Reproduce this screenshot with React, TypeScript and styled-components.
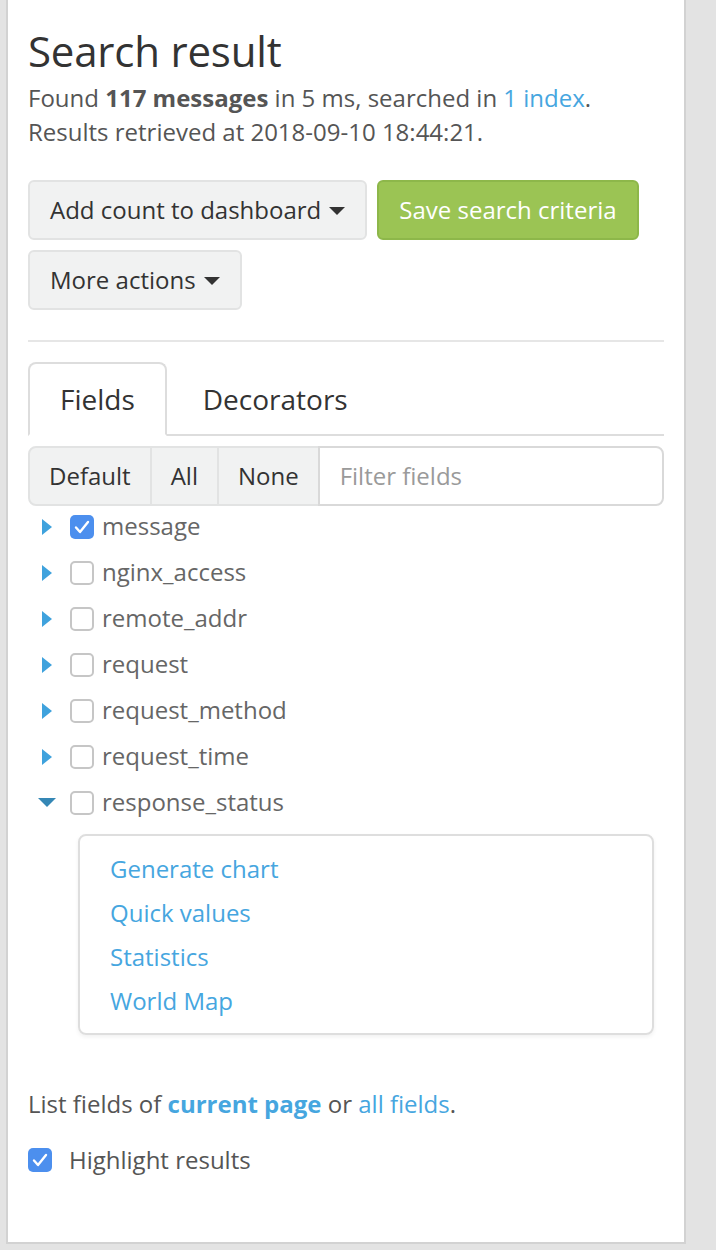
import React from "react";
import styled, { createGlobalStyle } from "styled-components";

const Global = createGlobalStyle`
  html, body { margin: 0; padding: 0; background: #e3e3e3; }
  body { font-family: "Open Sans", "Noto Sans", sans-serif; font-size: 24px; line-height: 34.29px; color: #555; }
  * { box-sizing: border-box; }
`;

const Page = styled.div`
  width: 716px;
  height: 1250px;
  background: #e3e3e3;
  overflow: hidden;
`;

const Panel = styled.div`
  margin-left: 6px;
  width: 680px;
  height: 1244px;
  background: #fff;
  border: 2px solid #d2d2d2;
  border-top: none;
  padding: 28px 20px 0 20px;
`;

const Title = styled.h1`
  margin: 0;
  font-size: 42px;
  line-height: 46px;
  font-weight: 400;
  color: #333;
  letter-spacing: -0.2px;
`;

const Info = styled.p`
  margin: 7px 0 0;
  color: #555;
`;

const Link = styled.a<{ $bold?: boolean }>`
  color: #46a6df;
  text-decoration: none;
  font-weight: ${(p) => (p.$bold ? 700 : 400)};
  cursor: pointer;
`;

const Actions = styled.div`
  margin-top: 30px;
  display: flex;
  flex-wrap: wrap;
  gap: 10px;
  width: 620px;
`;

const Button = styled.button<{ $variant?: "default" | "success" }>`
  font-family: inherit;
  font-size: 24px;
  line-height: 34px;
  padding: 11px 20px;
  border-radius: 6px;
  border: 2px solid ${(p) => (p.$variant === "success" ? "#8db74a" : "#e2e3e3")};
  background: ${(p) => (p.$variant === "success" ? "#9bc454" : "#f1f2f2")};
  color: ${(p) => (p.$variant === "success" ? "#fff" : "#333")};
  display: inline-flex;
  align-items: center;
  cursor: pointer;
`;

const Caret = styled.span`
  display: inline-block;
  margin-left: 8px;
  margin-top: 2px;
  width: 0;
  height: 0;
  border-top: 8px solid #333;
  border-left: 8px solid transparent;
  border-right: 8px solid transparent;
`;

const Divider = styled.hr`
  margin: 30px 0 20px;
  border: none;
  border-top: 2px solid #e6e6e6;
  height: 0;
`;

const Tabs = styled.ul`
  list-style: none;
  margin: 0;
  padding: 0;
  display: flex;
  border-bottom: 2px solid #dddddd;
`;

const Tab = styled.li<{ $active?: boolean }>`
  margin-bottom: -2px;
  margin-right: 4px;
  padding: 15px 30px;
  font-size: 28px;
  line-height: 40px;
  color: #333;
  border: 2px solid ${(p) => (p.$active ? "#dddddd" : "transparent")};
  border-bottom-color: ${(p) => (p.$active ? "#fff" : "transparent")};
  border-radius: 8px 8px 0 0;
  background: ${(p) => (p.$active ? "#fff" : "transparent")};
`;

const FilterBar = styled.div`
  margin-top: 10px;
  display: flex;
  height: 60px;
  width: 100%;
`;

const GroupButton = styled.button<{ $first?: boolean }>`
  flex: none;
  font-family: inherit;
  font-size: 24px;
  line-height: 34px;
  padding: 0 19px;
  background: #f1f2f2;
  color: #333;
  border: 2px solid #e2e3e3;
  margin-left: ${(p) => (p.$first ? "0" : "-2px")};
  border-radius: ${(p) => (p.$first ? "8px 0 0 8px" : "0")};
`;

const FilterInput = styled.input`
  flex: 1 1 0;
  min-width: 0;
  width: 0;
  margin-left: -2px;
  font-family: inherit;
  font-size: 24px;
  padding: 0 20px;
  border: 2px solid #d9d9d9;
  border-radius: 0 8px 8px 0;
  color: #555;
  outline: none;
  &::placeholder { color: #9a9a9a; }
`;

const FieldList = styled.ul`
  list-style: none;
  margin: 4px 0 0;
  padding: 0;
`;

const FieldRow = styled.li`
  display: flex;
  align-items: center;
  height: 34px;
  margin-bottom: 12px;
  color: #666;
`;

const Toggle = styled.span`
  width: 42px;
  padding-left: 14px;
  display: flex;
  align-items: center;
`;

const Box = styled.span<{ $checked?: boolean }>`
  width: 24px;
  height: 24px;
  border-radius: 5px;
  flex: none;
  display: flex;
  align-items: center;
  justify-content: center;
  background: ${(p) => (p.$checked ? "#4c8fee" : "#fff")};
  border: ${(p) => (p.$checked ? "none" : "2px solid #c6c6c6")};
`;

const FieldName = styled.span`
  margin-left: 8px;
`;

const Menu = styled.div`
  margin: 14px 10px 0 50px;
  border: 2px solid #dedede;
  border-radius: 8px;
  box-shadow: 0 2px 4px rgba(0, 0, 0, 0.06);
  padding: 16px 30px 14px;
  display: flex;
  flex-direction: column;
  gap: 10px;
`;

const Footer = styled.p`
  margin: 52px 0 0;
  color: #555;
`;

const HighlightRow = styled.label`
  margin-top: 22px;
  display: flex;
  align-items: center;
  gap: 17px;
  color: #555;
`;

const Check = () => (
  <svg width="16" height="14" viewBox="0 0 16 14">
    <path d="M2 7.5 L6 12 L14 2" fill="none" stroke="#fff" strokeWidth="2.4" strokeLinecap="round" strokeLinejoin="round" />
  </svg>
);

const RightArrow = () => (
  <svg width="10" height="16" viewBox="0 0 10 16">
    <path d="M0 0 L10 8 L0 16 Z" fill="#3fa2dd" />
  </svg>
);

const DownArrow = () => (
  <svg width="18" height="9" viewBox="0 0 18 9" style={{ marginLeft: -4 }}>
    <path d="M0 0 L18 0 L9 9 Z" fill="#3587b5" />
  </svg>
);

const fields = [
  { name: "message", checked: true },
  { name: "nginx_access" },
  { name: "remote_addr" },
  { name: "request" },
  { name: "request_method" },
  { name: "request_time" },
  { name: "response_status", open: true },
];

export default function App() {
  return (
    <Page>
      <Global />
      <Panel>
        <Title>Search result</Title>
        <Info>
          Found <strong>117 messages</strong> in 5 ms, searched in <Link>1 index</Link>.
          <br />
          Results retrieved at 2018-09-10 18:44:21.
        </Info>
        <Actions>
          <Button>
            Add count to dashboard <Caret />
          </Button>
          <Button $variant="success">Save search criteria</Button>
          <Button>
            More actions <Caret />
          </Button>
        </Actions>
        <Divider />
        <Tabs>
          <Tab $active>Fields</Tab>
          <Tab>Decorators</Tab>
        </Tabs>
        <FilterBar>
          <GroupButton $first>Default</GroupButton>
          <GroupButton>All</GroupButton>
          <GroupButton>None</GroupButton>
          <FilterInput placeholder="Filter fields" />
        </FilterBar>
        <FieldList>
          {fields.map((f) => (
            <FieldRow key={f.name}>
              <Toggle>{f.open ? <DownArrow /> : <RightArrow />}</Toggle>
              <Box $checked={f.checked}>{f.checked && <Check />}</Box>
              <FieldName>{f.name}</FieldName>
            </FieldRow>
          ))}
        </FieldList>
        <Menu>
          <Link>Generate chart</Link>
          <Link>Quick values</Link>
          <Link>Statistics</Link>
          <Link>World Map</Link>
        </Menu>
        <Footer>
          List fields of <Link $bold>current page</Link> or <Link>all fields</Link>.
        </Footer>
        <HighlightRow>
          <Box $checked>
            <Check />
          </Box>
          Highlight results
        </HighlightRow>
      </Panel>
    </Page>
  );
}
